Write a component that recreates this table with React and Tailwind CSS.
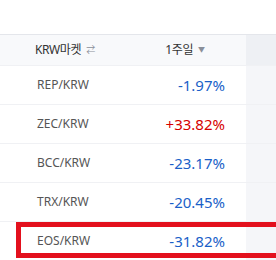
const rows = [
  { pair: "REP/KRW", rate: "-1.97%", up: false },
  { pair: "ZEC/KRW", rate: "+33.82%", up: true },
  { pair: "BCC/KRW", rate: "-23.17%", up: false },
  { pair: "TRX/KRW", rate: "-20.45%", up: false },
  { pair: "EOS/KRW", rate: "-31.82%", up: false, marked: true },
];

const font = { fontFamily: '"Noto Sans", "Noto Sans CJK KR", sans-serif' };

export default function App() {
  return (
    <div className="w-[276px] h-[260px] overflow-hidden bg-white" style={font}>
      <div className="h-[34px]" />

      {/* HEADER */}
      <div className="flex h-[31px] border-t border-[#e4e6eb] bg-[#f8f9fb]">
        <div className="w-[124px] flex items-center pl-[35px] gap-[5px] text-[12px] text-[#333] tracking-[-0.4px]">
          <span>KRW마켓</span>
          <span className="text-[9px] text-[#8a8f99]">⇄</span>
        </div>
        <div className="w-[122px] flex items-center justify-center gap-[5px] text-[12px] text-[#333] tracking-[-0.4px]">
          <span>1주일</span>
          <span className="text-[7px] text-[#8a8f99]">▼</span>
        </div>
        <div className="flex-1 bg-[#eef0f4]" />
      </div>

      {/* ROWS */}
      {rows.map((row) => (
        <div key={row.pair} className="relative flex h-[39px] border-t border-[#f0f1f4]">
          <div className="w-[124px] flex items-center pl-[37px] text-[12px] text-[#555]">
            {row.pair}
          </div>
          <div
            className={`w-[122px] flex items-center justify-end pr-[21px] text-[15px] ${
              row.up ? "text-[#d60000]" : "text-[#1a5fc8]"
            }`}
          >
            {row.rate}
          </div>
          <div className="flex-1 bg-[#f5f6f9]" />
          {row.marked && (
            <div className="absolute left-[16px] top-0 w-[280px] h-[36px] border-[5px] border-[#e3101d]" />
          )}
        </div>
      ))}
    </div>
  );
}
